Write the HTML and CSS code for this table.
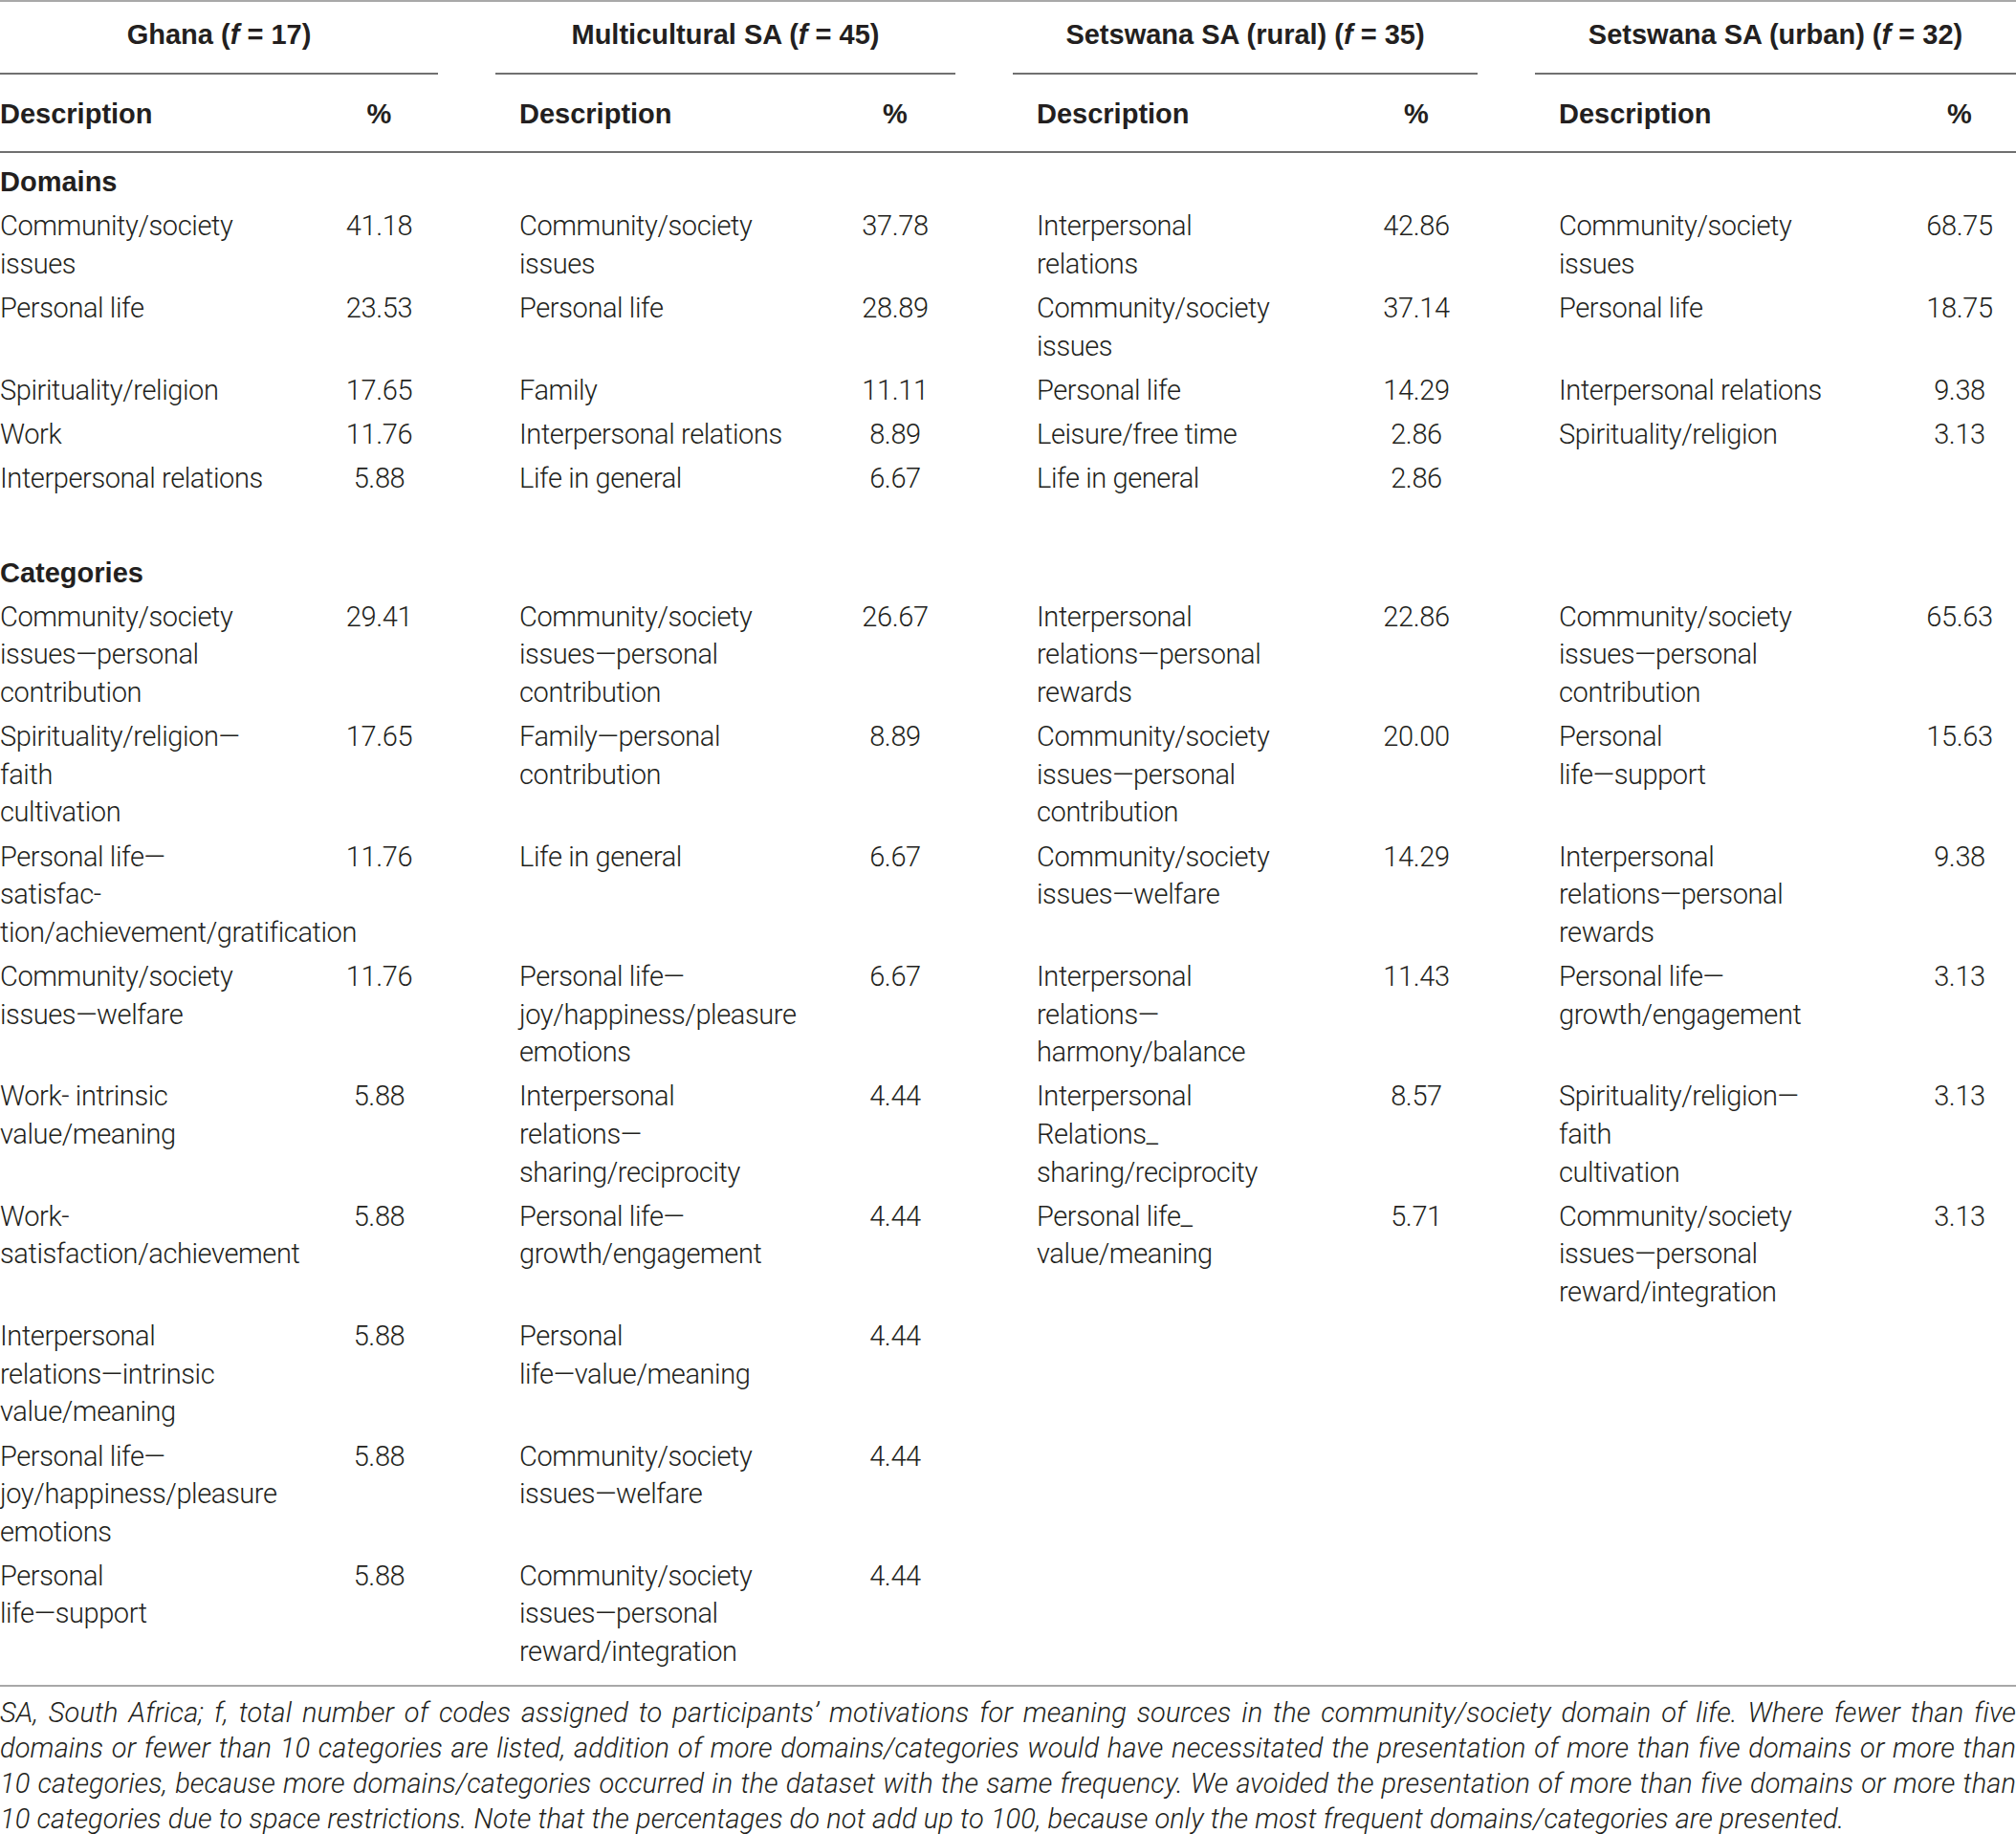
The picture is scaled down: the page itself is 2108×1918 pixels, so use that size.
FILE: index.html
```html
<!DOCTYPE html>
<html lang="en">
<head>
<meta charset="utf-8">
<title>Table</title>
<link rel="stylesheet" href="styles.css">
</head>
<body>
<div class="tbl">
  <div class="gh">Ghana (<i>f</i> = 17)</div>
  <div class="gh off">Multicultural SA (<i>f</i> = 45)</div>
  <div class="gh off">Setswana SA (rural) (<i>f</i> = 35)</div>
  <div class="gh off">Setswana SA (urban) (<i>f</i> = 32)</div>

  <div class="ch">Description</div><div class="ch pct">%</div>
  <div class="ch ind">Description</div><div class="ch pct">%</div>
  <div class="ch ind">Description</div><div class="ch pct">%</div>
  <div class="ch ind">Description</div><div class="ch pct">%</div>

  <div class="sec">Domains</div>

  <div class="d">Community/society<br>issues</div><div class="p">41.18</div>
  <div class="d ind">Community/society<br>issues</div><div class="p">37.78</div>
  <div class="d ind">Interpersonal<br>relations</div><div class="p">42.86</div>
  <div class="d ind">Community/society<br>issues</div><div class="p">68.75</div>

  <div class="d">Personal life</div><div class="p">23.53</div>
  <div class="d ind">Personal life</div><div class="p">28.89</div>
  <div class="d ind">Community/society<br>issues</div><div class="p">37.14</div>
  <div class="d ind">Personal life</div><div class="p">18.75</div>

  <div class="d">Spirituality/religion</div><div class="p">17.65</div>
  <div class="d ind">Family</div><div class="p">11.11</div>
  <div class="d ind">Personal life</div><div class="p">14.29</div>
  <div class="d ind">Interpersonal relations</div><div class="p">9.38</div>

  <div class="d">Work</div><div class="p">11.76</div>
  <div class="d ind">Interpersonal relations</div><div class="p">8.89</div>
  <div class="d ind">Leisure/free time</div><div class="p">2.86</div>
  <div class="d ind">Spirituality/religion</div><div class="p">3.13</div>

  <div class="d">Interpersonal relations</div><div class="p">5.88</div>
  <div class="d ind">Life in general</div><div class="p">6.67</div>
  <div class="d ind">Life in general</div><div class="p">2.86</div>
  <div class="d ind"></div><div class="p"></div>

  <div class="gap"></div>

  <div class="sec cat">Categories</div>

  <div class="d">Community/society<br>issues—personal<br>contribution</div><div class="p">29.41</div>
  <div class="d ind">Community/society<br>issues—personal<br>contribution</div><div class="p">26.67</div>
  <div class="d ind">Interpersonal<br>relations—personal<br>rewards</div><div class="p">22.86</div>
  <div class="d ind">Community/society<br>issues—personal<br>contribution</div><div class="p">65.63</div>

  <div class="d">Spirituality/religion—<br>faith<br>cultivation</div><div class="p">17.65</div>
  <div class="d ind">Family—personal<br>contribution</div><div class="p">8.89</div>
  <div class="d ind">Community/society<br>issues—personal<br>contribution</div><div class="p">20.00</div>
  <div class="d ind">Personal<br>life—support</div><div class="p">15.63</div>

  <div class="d">Personal life—<br>satisfac-<br>tion/achievement/gratification</div><div class="p">11.76</div>
  <div class="d ind">Life in general</div><div class="p">6.67</div>
  <div class="d ind">Community/society<br>issues—welfare</div><div class="p">14.29</div>
  <div class="d ind">Interpersonal<br>relations—personal<br>rewards</div><div class="p">9.38</div>

  <div class="d">Community/society<br>issues—welfare</div><div class="p">11.76</div>
  <div class="d ind">Personal life—<br>joy/happiness/pleasure<br>emotions</div><div class="p">6.67</div>
  <div class="d ind">Interpersonal<br>relations—<br>harmony/balance</div><div class="p">11.43</div>
  <div class="d ind">Personal life—<br>growth/engagement</div><div class="p">3.13</div>

  <div class="d">Work- intrinsic<br>value/meaning</div><div class="p">5.88</div>
  <div class="d ind">Interpersonal<br>relations—<br>sharing/reciprocity</div><div class="p">4.44</div>
  <div class="d ind">Interpersonal<br>Relations_<br>sharing/reciprocity</div><div class="p">8.57</div>
  <div class="d ind">Spirituality/religion—<br>faith<br>cultivation</div><div class="p">3.13</div>

  <div class="d">Work-<br>satisfaction/achievement</div><div class="p">5.88</div>
  <div class="d ind">Personal life—<br>growth/engagement</div><div class="p">4.44</div>
  <div class="d ind">Personal life_<br>value/meaning</div><div class="p">5.71</div>
  <div class="d ind">Community/society<br>issues—personal<br>reward/integration</div><div class="p">3.13</div>

  <div class="d">Interpersonal<br>relations—intrinsic<br>value/meaning</div><div class="p">5.88</div>
  <div class="d ind">Personal<br>life—value/meaning</div><div class="p">4.44</div>
  <div class="d ind"></div><div class="p"></div>
  <div class="d ind"></div><div class="p"></div>

  <div class="d">Personal life—<br>joy/happiness/pleasure<br>emotions</div><div class="p">5.88</div>
  <div class="d ind">Community/society<br>issues—welfare</div><div class="p">4.44</div>
  <div class="d ind"></div><div class="p"></div>
  <div class="d ind"></div><div class="p"></div>

  <div class="d">Personal<br>life—support</div><div class="p">5.88</div>
  <div class="d ind">Community/society<br>issues—personal<br>reward/integration</div><div class="p">4.44</div>
  <div class="d ind"></div><div class="p"></div>
  <div class="d ind"></div><div class="p"></div>
</div>
<div class="note">
  <span class="fl">SA, South Africa; f, total number of codes assigned to participants’ motivations for meaning sources in the community/society domain of life. Where fewer than five</span>
  <span class="fl">domains or fewer than 10 categories are listed, addition of more domains/categories would have necessitated the presentation of more than five domains or more than</span>
  <span class="fl">10 categories, because more domains/categories occurred in the dataset with the same frequency. We avoided the presentation of more than five domains or more than</span>
  <span class="fl last">10 categories due to space restrictions. Note that the percentages do not add up to 100, because only the most frequent domains/categories are presented.</span>
</div>
</body>
</html>
```
FILE: styles.css
```css
html, body {
  margin: 0;
  padding: 0;
  background: #ffffff;
}
body {
  width: 2108px;
  font-family: Roboto, "Liberation Sans", sans-serif;
  color: #231f20;
}
.tbl {
  display: grid;
  grid-template-columns: 335px 123px 415px 126px 418px 128px 445px 118px;
  border-top: 2px solid #a8a8a8;
  border-bottom: 2px solid #a8a8a8;
  padding-bottom: 11px;
  font-size: 29px;
  font-weight: 300;
  letter-spacing: -0.4px;
  line-height: 39.6px;
}
.gh {
  grid-column: span 2;
  text-align: center;
  font: 700 29px/40px "Liberation Sans", Arial, sans-serif;
  letter-spacing: 0;
  padding: 14px 0 20px;
  border-bottom: 2px solid #707070;
}
.gh.off {
  margin-left: 60px;
}
.ch {
  font: 700 29px/40px "Liberation Sans", Arial, sans-serif;
  letter-spacing: 0;
  padding: 21px 0 19px;
  border-bottom: 2px solid #707070;
}
.ch.pct {
  text-align: center;
}
.ch.ind {
  padding-left: 85px;
}
.sec {
  grid-column: 1 / -1;
  font: 700 29px/39.6px "Liberation Sans", Arial, sans-serif;
  letter-spacing: 0;
  padding: 11px 0 3.3px;
}
.sec.cat {
  padding-top: 9.5px;
}
.gap {
  grid-column: 1 / -1;
  height: 46.2px;
}
.d {
  padding: 3.3px 0;
  white-space: nowrap;
}
.d.ind {
  padding-left: 85px;
}
.p {
  padding: 3.3px 0;
  text-align: center;
}
.note {
  padding-top: 9px;
  font-family: Roboto, "Liberation Sans", sans-serif;
  font-style: italic;
  font-weight: 300;
  font-size: 29px;
  line-height: 37px;
  letter-spacing: 0.1px;
  color: #231f20;
}
.fl {
  display: block;
  white-space: nowrap;
  text-align: justify;
  text-align-last: justify;
}
.fl.last {
  text-align-last: left;
}
```
